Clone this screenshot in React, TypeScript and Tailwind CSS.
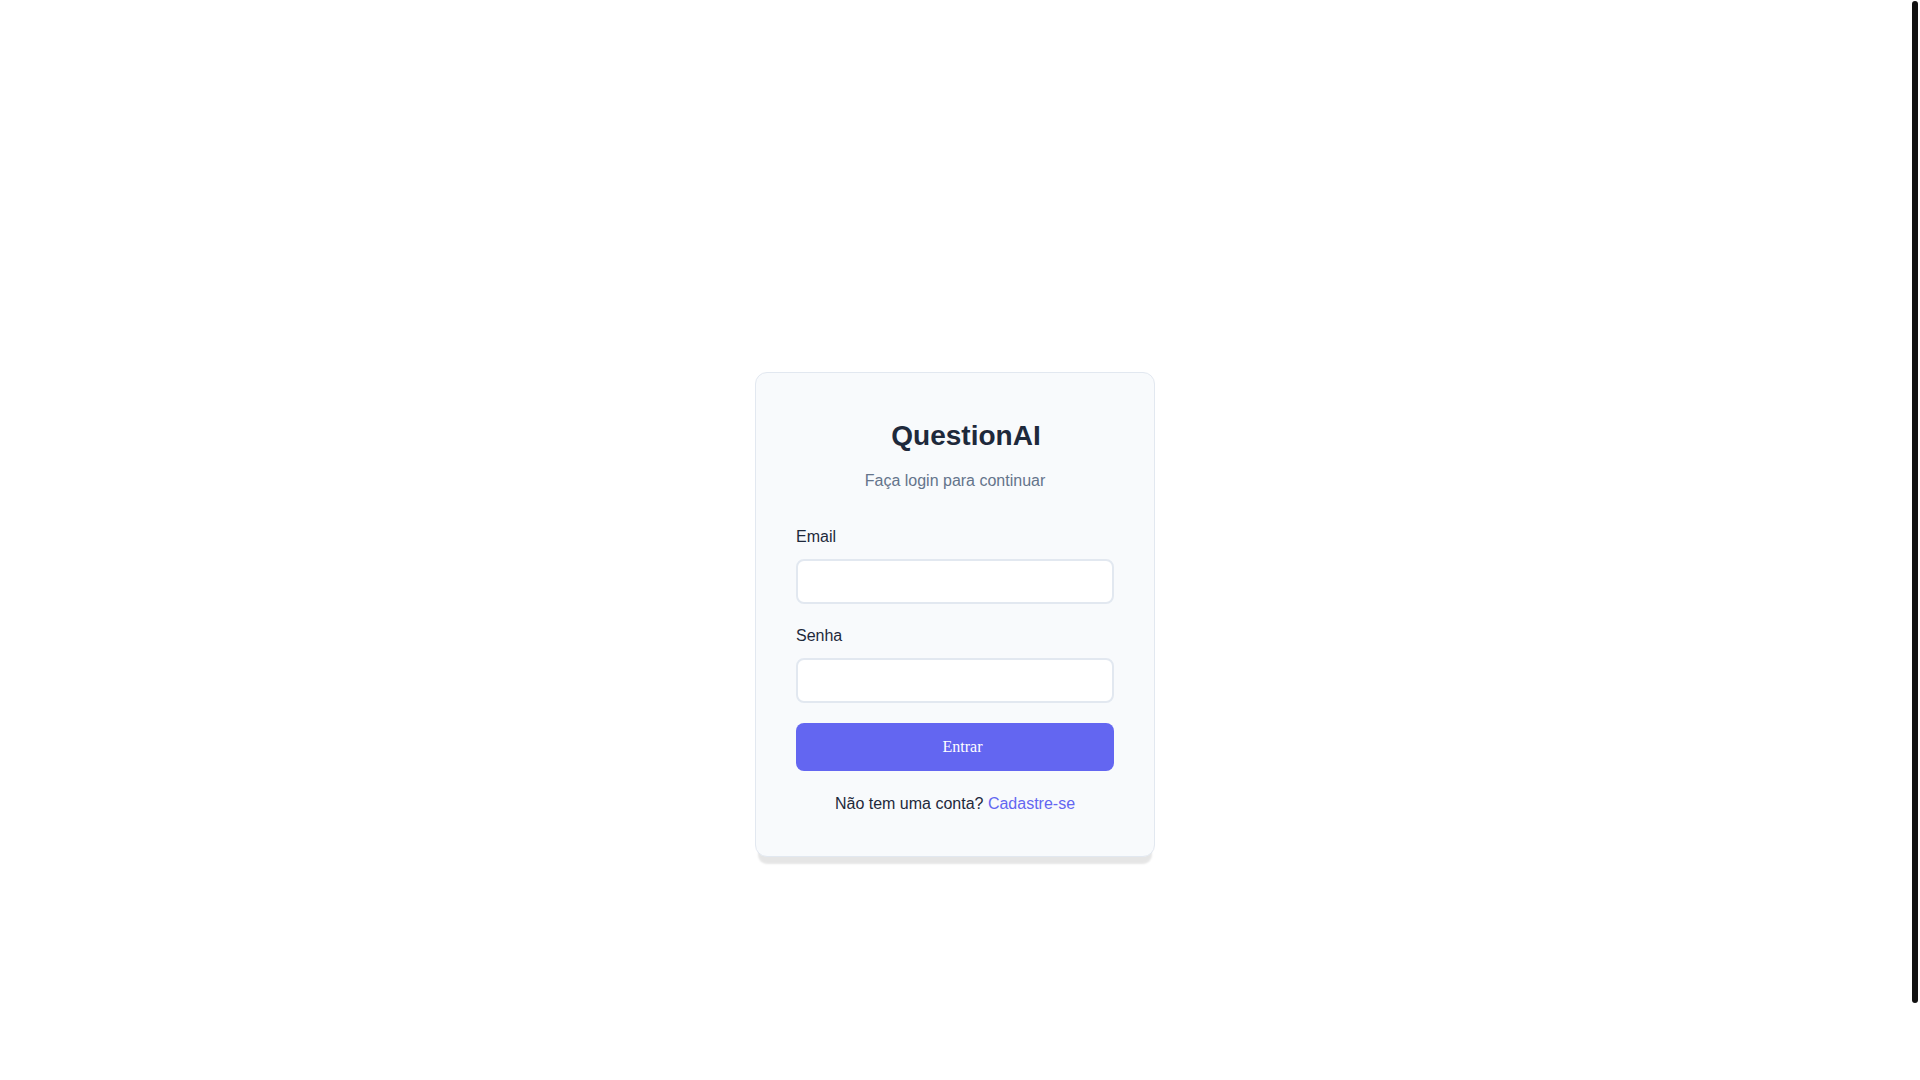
import { useState } from 'react'

// ─── Field ────────────────────────────────────────────────────────────────────

function Field({
  label,
  type,
  value,
  onChange,
}: {
  label: string
  type: string
  value: string
  onChange: (v: string) => void
}): React.JSX.Element {
  return (
    <div className="flex flex-col">
      <label className="mb-2.5 text-base leading-6 text-[#1e293b]">{label}</label>
      <input
        type={type}
        value={value}
        onChange={(e) => onChange(e.target.value)}
        className="h-[45px] w-full rounded-lg border-2 border-[#e2e8f0] bg-white px-3 text-base text-[#1e293b] outline-none"
      />
    </div>
  )
}

// ─── Login page ───────────────────────────────────────────────────────────────

export default function App(): React.JSX.Element {
  const [email, setEmail] = useState('')
  const [password, setPassword] = useState('')

  return (
    <div className="relative h-screen overflow-hidden bg-white font-['Liberation_Sans',Arial,sans-serif]">
      <div className="flex min-h-[1228px] items-center justify-center pr-[10px]">
        <form
          onSubmit={(e) => e.preventDefault()}
          className="flex w-[400px] flex-col rounded-xl border border-[#e2e8f0] bg-[#f8fafc] px-10 pb-10 pt-[42px] shadow-[0_10px_2px_-3px_rgba(0,0,0,0.1)]"
        >
          <h1 className="mb-3 pl-[22px] text-center text-[28px] font-bold leading-[42px] text-[#1e293b]">
            QuestionAI
          </h1>
          <p className="mb-8 text-center text-base leading-6 text-[#64748b]">Faça login para continuar</p>

          <div className="flex flex-col gap-5">
            <Field label="Email" type="email" value={email} onChange={setEmail} />
            <Field label="Senha" type="password" value={password} onChange={setPassword} />
            <button
              type="submit"
              className="h-12 w-full rounded-lg bg-[#6366f1] pl-[15px] font-['Liberation_Serif',serif] text-base text-white"
            >
              Entrar
            </button>
          </div>

          <p className="mt-[21px] text-center text-base leading-6 text-[#1e293b]">
            Não tem uma conta? <a className="text-[#6366f1]">Cadastre-se</a>
          </p>
        </form>
      </div>

      {/* scrollbar thumb */}
      <div className="pointer-events-none fixed right-[2px] top-[1px] h-[1002px] w-[6px] rounded-[3px] bg-[#111]" />
    </div>
  )
}
